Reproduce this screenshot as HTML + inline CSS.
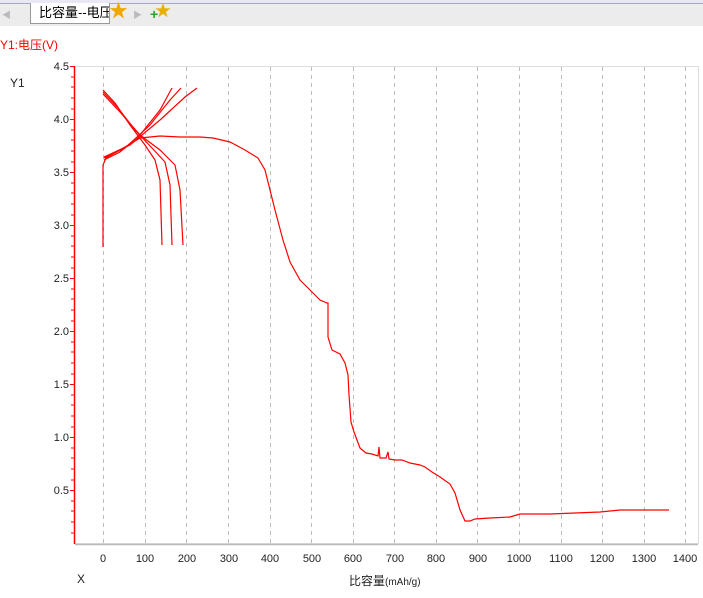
<!DOCTYPE html>
<html><head><meta charset="utf-8"><style>
body{margin:0;width:703px;height:598px;background:#fff;overflow:hidden;font-family:"Liberation Sans","Noto Sans CJK SC",sans-serif;position:relative}
.bar{position:absolute;left:0;top:0;width:703px;height:26px;background:#ececec}
.top{position:absolute;left:0;top:0;width:703px;height:3px;background:#e8e8f4;border-bottom:1px solid #a8a8c0}
.tab{position:absolute;left:30px;top:3px;width:70px;height:20px;background:#fff;border:1px solid #999;border-top:none;font-size:13px;line-height:20px;padding-left:8px;color:#000;white-space:nowrap;overflow:hidden}
t{position:absolute;font-size:12px;color:#222}
</style></head><body>
<div class="bar"></div><div class="top"></div>
<div class="tab">比容量--电压</div>
<div style="position:absolute;left:2px;top:8px;color:#bbb;font-size:9px">◀</div>
<div style="position:absolute;left:133px;top:8px;color:#bbb;font-size:9px">▶</div>
<div style="position:absolute;left:109px;top:1px;color:#f0a800;font-size:19px;line-height:22px">★</div>
<div style="position:absolute;left:155px;top:3px;color:#e8b000;font-size:16px;line-height:18px">★<span style="position:absolute;left:-5px;top:2px;color:#2a2;font-weight:bold;font-size:14px">+</span></div>
<div style="position:absolute;left:0;top:36px;font-size:12px;color:#f00">Y1:电压(V)</div>
<t style="left:10px;top:76px">Y1</t>
<t style="left:77px;top:572px">X</t>
<t style="left:349px;top:572px">比容量<span style="font-size:10px">(mAh/g)</span></t>
<svg width="703" height="598" style="position:absolute;left:0;top:0" font-family="Liberation Sans" font-size="11" fill="#222">
<rect x="74.5" y="66.5" width="624" height="477" fill="none" stroke="#ddd"/>
<g stroke="#bbb" stroke-dasharray="4,4">
<line x1="103.5" y1="67" x2="103.5" y2="543"/><line x1="145.5" y1="67" x2="145.5" y2="543"/><line x1="186.5" y1="67" x2="186.5" y2="543"/><line x1="228.5" y1="67" x2="228.5" y2="543"/><line x1="270.5" y1="67" x2="270.5" y2="543"/><line x1="311.5" y1="67" x2="311.5" y2="543"/><line x1="353.5" y1="67" x2="353.5" y2="543"/><line x1="394.5" y1="67" x2="394.5" y2="543"/><line x1="436.5" y1="67" x2="436.5" y2="543"/><line x1="477.5" y1="67" x2="477.5" y2="543"/><line x1="519.5" y1="67" x2="519.5" y2="543"/><line x1="561.5" y1="67" x2="561.5" y2="543"/><line x1="602.5" y1="67" x2="602.5" y2="543"/><line x1="644.5" y1="67" x2="644.5" y2="543"/><line x1="685.5" y1="67" x2="685.5" y2="543"/>
</g>
<line x1="75" y1="544.5" x2="698" y2="544.5" stroke="#bbb" stroke-width="1.5"/>
<line x1="74.5" y1="66" x2="74.5" y2="544" stroke="#f00" stroke-width="1.5"/>
<g stroke="#f00">
<path d="M70 66.5h5M70 119.5h5M70 172.5h5M70 225.5h5M70 278.5h5M70 331.5h5M70 384.5h5M70 437.5h5M70 490.5h5"/>
<path d="M71 77h4M71 87h4M71 98h4M71 109h4M71 130h4M71 140h4M71 151h4M71 162h4M71 183h4M71 193h4M71 204h4M71 215h4M71 236h4M71 246h4M71 257h4M71 268h4M71 289h4M71 299h4M71 310h4M71 321h4M71 342h4M71 352h4M71 363h4M71 374h4M71 395h4M71 405h4M71 416h4M71 427h4M71 448h4M71 458h4M71 469h4M71 480h4M71 501h4M71 511h4M71 522h4M71 533h4"/>
</g>
<g text-anchor="end"><text x="69" y="70">4.5</text><text x="69" y="123">4.0</text><text x="69" y="176">3.5</text><text x="69" y="229">3.0</text><text x="69" y="282">2.5</text><text x="69" y="335">2.0</text><text x="69" y="388">1.5</text><text x="69" y="441">1.0</text><text x="69" y="494">0.5</text></g>
<g text-anchor="middle"><text x="103" y="562">0</text><text x="145" y="562">100</text><text x="187" y="562">200</text><text x="229" y="562">300</text><text x="270" y="562">400</text><text x="312" y="562">500</text><text x="353" y="562">600</text><text x="395" y="562">700</text><text x="436" y="562">800</text><text x="478" y="562">900</text><text x="519" y="562">1000</text><text x="561" y="562">1100</text><text x="602" y="562">1200</text><text x="644" y="562">1300</text><text x="685" y="562">1400</text></g>
<g fill="none" stroke="#f00" stroke-width="1.2">
<path d="M103 247V165L106 158L120 150L140 138L160 136L180 137L200 137L213 138L230 142L245 150L258 158L265 170L270 190L275 210L283 240L290 262L300 280L310 290L320 300L327 303L328 303L328 337L332 350L340 354L345 363L348 375L349 395L351 422L354 432L360 448L366 453L372 454L378 456L379 447L380 458L386 458L388 452L389 459L395 460L402 460L410 463L420 465L425 467L432 472L440 477L450 484L455 493L460 510L465 521L470 521L475 519L490 518L510 517L520 514L550 514L600 512L620 510L669 510"/>
<path d="M104 160L120 152L140 135L160 110L172 88"/>
<path d="M104 158L125 148L150 125L170 100L181 88"/>
<path d="M104 157L130 145L160 120L185 97L197 88"/>
<path d="M103 90L115 103L130 125L145 145L155 160L160 180L162 245"/>
<path d="M103 92L118 108L135 130L152 148L165 162L170 185L172 245"/>
<path d="M103 94L120 112L140 135L160 150L175 165L180 190L183 245"/>
</g>
</svg>
</body></html>
